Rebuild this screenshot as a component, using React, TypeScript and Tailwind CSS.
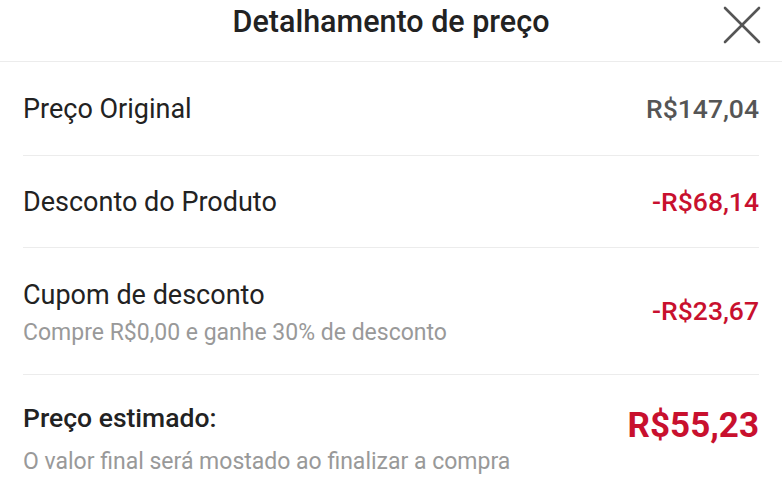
const rows = [
  { label: "Preço Original", value: "R$147,04", tone: "text-[#555555]", h: "h-[94px]" },
  { label: "Desconto do Produto", value: "-R$68,14", tone: "text-[#c8102e]", h: "h-[92px]" },
];

function CloseIcon() {
  return (
    <svg width="38" height="38" viewBox="0 0 38 38" fill="none" stroke="#555555" strokeWidth="2.6" strokeLinecap="round">
      <line x1="2" y1="2" x2="36" y2="36" />
      <line x1="36" y1="2" x2="2" y2="36" />
    </svg>
  );
}

export default function App() {
  return (
    <div className="h-[500px] w-[782px] overflow-hidden bg-white font-['Roboto',sans-serif]">
      {/* Header */}
      <div className="relative flex h-[62px] items-start justify-center border-b border-[#ececec] pt-[6px]">
        <h1 className="text-[30.5px] font-medium leading-[31px] text-[#222222]">Detalhamento de preço</h1>
        <button className="absolute left-[723px] top-[6px]">
          <CloseIcon />
        </button>
      </div>

      {rows.map((r) => (
        <div key={r.label} className="px-[23px]">
          <div className={`flex ${r.h} items-center justify-between border-b border-[#ececec]`}>
            <span className="text-[27px] leading-[36px] text-[#222222]">{r.label}</span>
            <span className={`text-[26.5px] font-medium leading-[36px] ${r.tone}`}>{r.value}</span>
          </div>
        </div>
      ))}

      {/* Coupon */}
      <div className="px-[23px]">
        <div className="flex h-[127px] items-center justify-between border-b border-[#ececec]">
          <div className="flex flex-col pt-[7px]">
            <span className="text-[27px] leading-[36px] text-[#222222]">Cupom de desconto</span>
            <span className="text-[23px] leading-[40px] text-[#999999]">
              Compre R$0,00 e ganhe 30% de desconto
            </span>
          </div>
          <span className="text-[26.5px] font-medium leading-[36px] text-[#c8102e]">-R$23,67</span>
        </div>
      </div>

      {/* Total */}
      <div className="px-[23px]">
        <div className="flex items-start justify-between pt-[25px]">
          <div className="flex flex-col">
            <span className="text-[26.5px] font-medium leading-[36px] text-[#222222]">Preço estimado:</span>
            <span className="mt-[10px] text-[23px] leading-[32px] text-[#999999]">
              O valor final será mostado ao finalizar a compra
            </span>
          </div>
          <span className="mt-[6px] text-[35px] font-bold leading-[40px] text-[#c8102e]">R$55,23</span>
        </div>
      </div>
    </div>
  );
}
